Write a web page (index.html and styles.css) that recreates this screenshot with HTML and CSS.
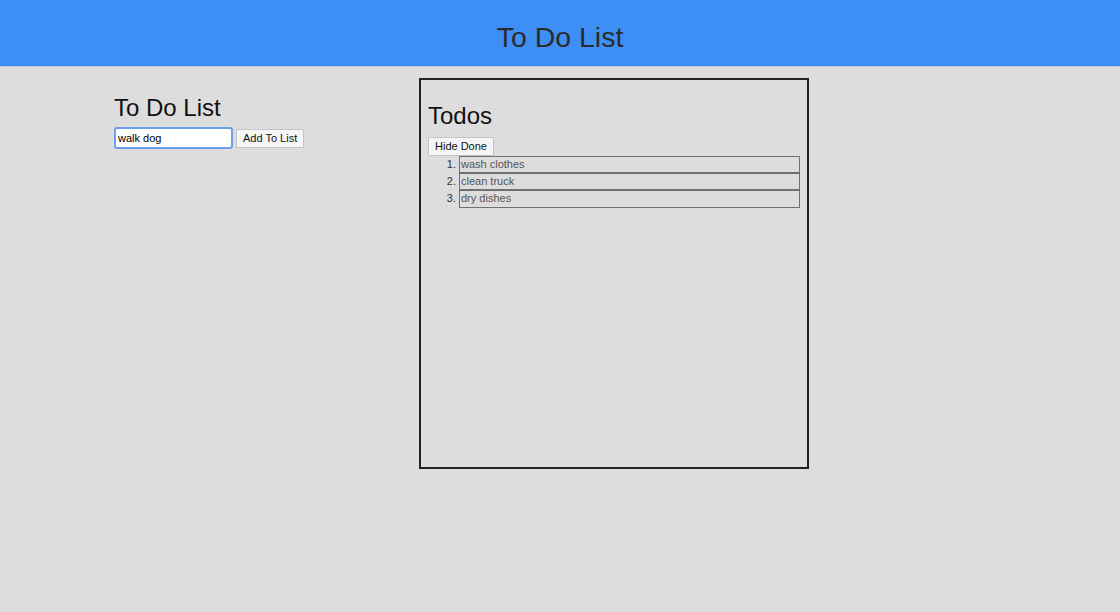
FILE: index.html
```html
<!DOCTYPE html>
<html>
<head>
<meta charset="utf-8">
<title>To Do List</title>
<link rel="stylesheet" href="styles.css">
</head>
<body>
<header class="top-bar">
  <h1 class="top-title">To Do List</h1>
</header>
<main class="main">
  <section class="add-col">
    <h2 class="add-title">To Do List</h2>
    <div class="add-row">
      <input class="add-input" type="text" value="walk dog">
      <button class="btn">Add To List</button>
    </div>
  </section>
  <section class="todo-box">
    <h2 class="todo-title">Todos</h2>
    <button class="btn">Hide Done</button>
    <ol class="todo-list">
      <li class="todo-item"><span class="todo-text">wash clothes</span></li>
      <li class="todo-item"><span class="todo-text">clean truck</span></li>
      <li class="todo-item"><span class="todo-text">dry dishes</span></li>
    </ol>
  </section>
</main>
</body>
</html>
```
FILE: styles.css
```css
* { box-sizing: border-box; }
html, body {
  margin: 0;
  padding: 0;
  background: #dddddd;
  font-family: "Liberation Sans", Arial, Helvetica, sans-serif;
  color: #111;
}
.top-bar {
  height: 67px;
  background: #3e8ff5;
  border-bottom: 1px solid #b9c7da;
  display: flex;
  align-items: flex-start;
  justify-content: center;
}
.top-title {
  margin: 0;
  padding-top: 21px;
  font-size: 28.5px;
  font-weight: normal;
  line-height: 32px;
  color: #2b2b2b;
}
.main {
  display: flex;
  align-items: flex-start;
  padding-left: 114px;
  padding-top: 11px;
}
.add-col {
  width: 305px;
  padding-top: 16px;
}
.add-title {
  margin: 0 0 5px 0;
  font-size: 24px;
  font-weight: normal;
  line-height: 28px;
  color: #111;
}
.add-row {
  display: flex;
  align-items: center;
  gap: 3px;
}
.add-input {
  width: 119px;
  height: 22px;
  margin: 0;
  padding: 0 2px;
  font-family: "Liberation Sans", Arial, sans-serif;
  font-size: 11px;
  color: #000;
  background: #fff;
  border: 2px solid #6a9ff0;
  border-radius: 3px;
  outline: none;
}
.btn {
  height: 19px;
  margin: 0;
  padding: 0 6px;
  font-family: "Liberation Sans", Arial, sans-serif;
  font-size: 11px;
  color: #111;
  background: #f6f6f6;
  border: 1px solid #c4c4c4;
  border-radius: 1px;
}
.todo-box {
  width: 390px;
  height: 391px;
  border: 2px solid #222;
  padding: 22px 7px 0 7px;
}
.todo-title {
  margin: 0 0 7px 0;
  font-size: 24px;
  font-weight: normal;
  line-height: 27px;
  color: #111;
}
.todo-list {
  margin: 0;
  padding-left: 31px;
  font-size: 11px;
  color: #555;
}
.todo-item {
  height: 17.4px;
  line-height: 15.4px;
  border: 1px solid #707070;
  padding-left: 1px;
}
.todo-item::marker {
  color: #333;
}
```
